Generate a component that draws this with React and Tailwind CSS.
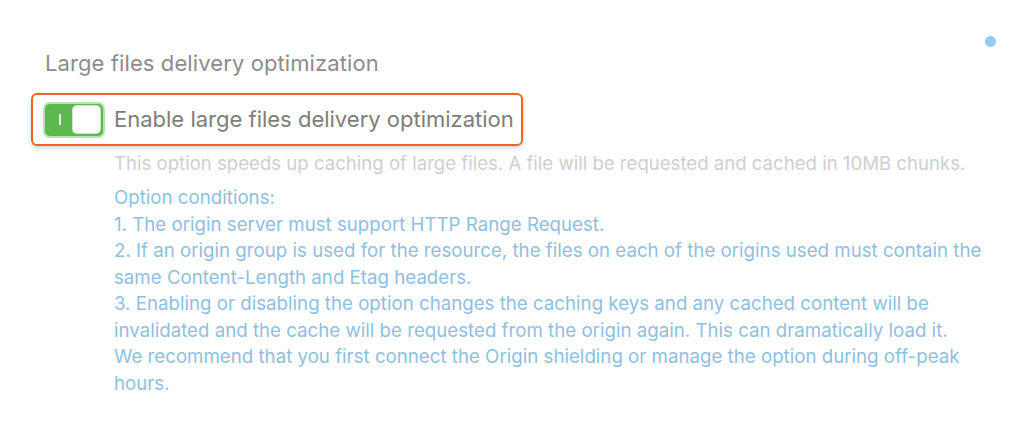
const App = () => {
    return (
        <div className="relative w-[1028px] h-[443px] bg-white overflow-hidden" style={{ fontFamily: "Inter, 'Noto Sans', sans-serif" }}>
            <div className="absolute left-[985px] top-[36px] w-[11px] h-[11px] rounded-full bg-[#92cbf3]"></div>
            <div className="pt-[49px] pl-[45px]">
                <h2 className="text-[22px] leading-[28px] tracking-[0.1px] text-[#8c8c8c]">Large files delivery optimization</h2>
                <div className="mt-[16px] -ml-[14px] w-[492px] h-[53px] flex items-center gap-[11px] pl-[12px] border-2 border-[#f0641e] rounded-[6px] shadow-[0_2px_4px_rgba(0,0,0,0.18)]">
                    <Toggle />
                    <span className="text-[22px] text-[#7d7d7d]">Enable large files delivery optimization</span>
                </div>
                <div className="pl-[69px] pt-[4px]">
                    <p className="text-[18.6px] leading-[26px] text-[#cfcfcf] whitespace-nowrap">
                        This option speeds up caching of large files. A file will be requested and cached in 10MB chunks.
                    </p>
                    <div className="mt-[9px] w-[885px] text-[18.7px] leading-[26.5px] text-[#8fc0e2]">
                        <p>Option conditions:</p>
                        <p>1. The origin server must support HTTP Range Request.</p>
                        <p>2. If an origin group is used for the resource, the files on each of the origins used must contain the same Content-Length and Etag headers.</p>
                        <p>
                            3. Enabling or disabling the option changes the caching keys and any cached content will be invalidated and the cache will be requested from the origin again. This can dramatically load it.
                            <br />
                            We recommend that you first connect the Origin shielding or manage the option during off-peak hours.
                        </p>
                    </div>
                </div>
            </div>
        </div>
    );
};

const Toggle = () => {
    return (
        <div className="w-[58px] h-[32px] rounded-[5px] bg-[#5cb84f] ring-2 ring-[#b9e2b2] flex items-center justify-between pl-[14px] pr-[3px]">
            <span className="w-[2px] h-[11px] bg-[#e8f5e6]"></span>
            <span className="w-[27px] h-[27px] rounded-[4px] bg-white ring-1 ring-[#cdebc7]"></span>
        </div>
    );
};

export default App;
